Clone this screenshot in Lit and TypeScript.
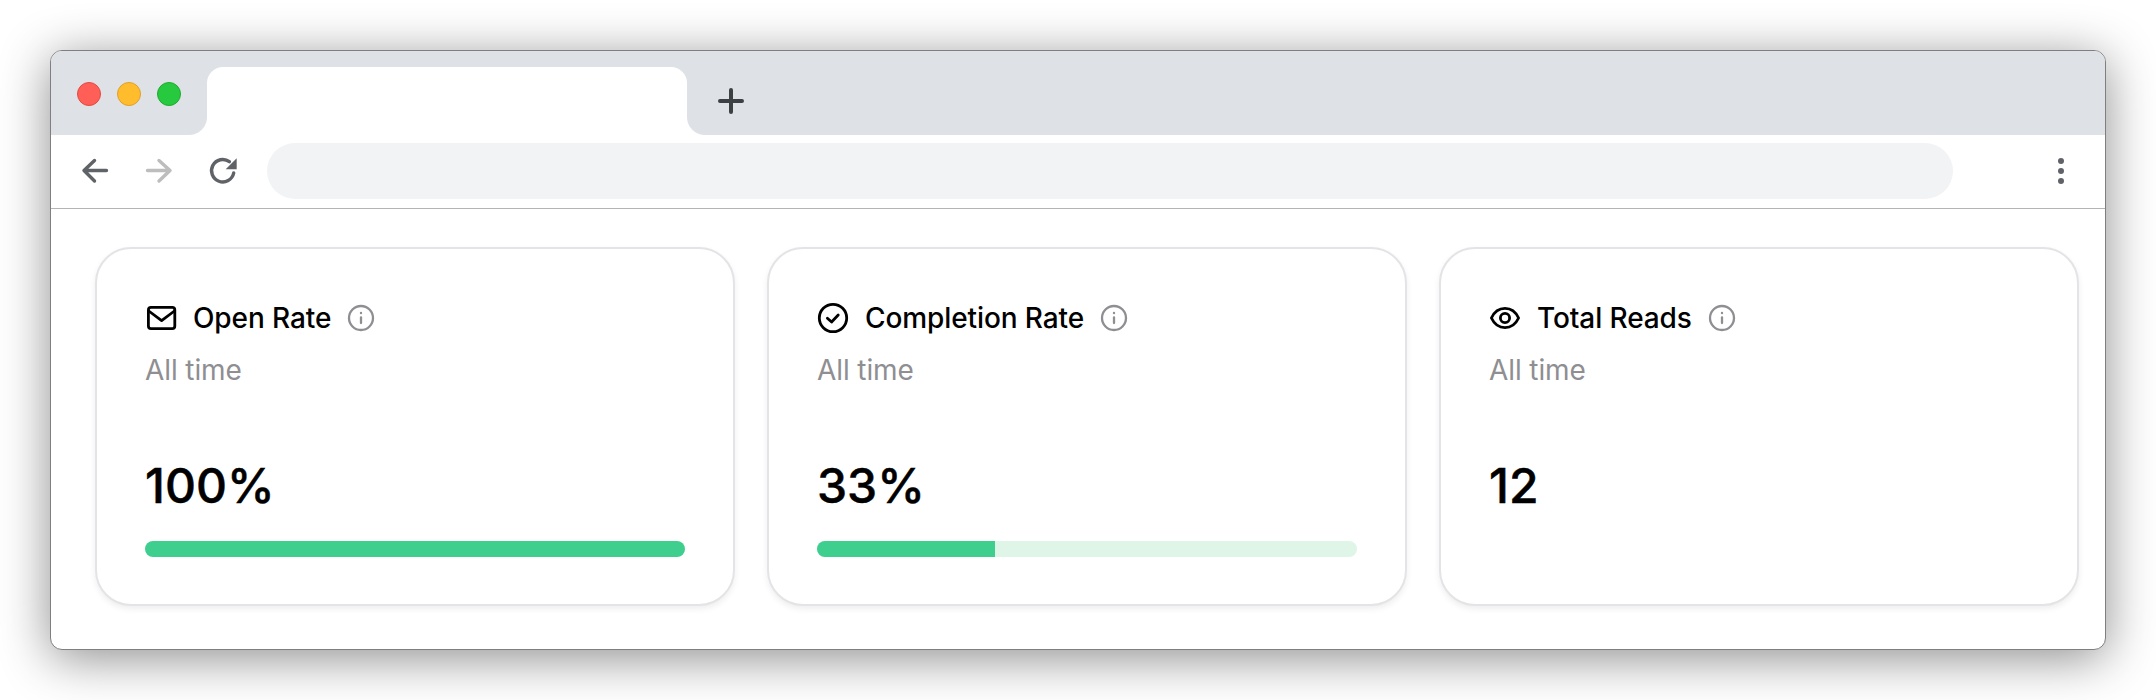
import { LitElement, html, css, svg, nothing } from "lit";
import { customElement } from "lit/decorators.js";

type Metric = {
  title: string;
  icon: "mail" | "check" | "eye";
  value: string;
  progress?: number;
};

const METRICS: Metric[] = [
  { title: "Open Rate", icon: "mail", value: "100%", progress: 100 },
  { title: "Completion Rate", icon: "check", value: "33%", progress: 33 },
  { title: "Total Reads", icon: "eye", value: "12" },
];

const ICONS = {
  mail: svg`
    <rect x="3.4" y="5.3" width="26.4" height="21.4" rx="2.6"></rect>
    <path d="M3.8 9 L16.6 18.6 L29.4 9"></path>`,
  check: svg`
    <circle cx="16" cy="16" r="13.7"></circle>
    <path d="M10.4 16.2 L14.6 20 L21.2 13"></path>`,
  eye: svg`
    <path d="M2.4 16 C5.4 9.6 10.2 6.4 16 6.4 C21.8 6.4 26.6 9.6 29.6 16 C26.6 22.4 21.8 25.6 16 25.6 C10.2 25.6 5.4 22.4 2.4 16 Z"></path>
    <circle cx="16" cy="16" r="4.6"></circle>`,
};

@customElement("app-root")
export class AppRoot extends LitElement {
  static styles = css`
    :host {
      display: block;
      box-sizing: border-box;
      height: 700px;
      padding: 50px;
      background: #fff;
      font-family: Inter, "Liberation Sans", sans-serif;
    }

    /* ── Browser chrome ─────────────────────────────────────────────────── */
    .window {
      box-sizing: border-box;
      display: flex;
      flex-direction: column;
      height: 600px;
      background: #fff;
      border: 1px solid #7f7f7f;
      border-radius: 12px;
      box-shadow: 0 8px 50px rgba(0, 0, 0, 0.45);
      overflow: hidden;
    }
    .tabstrip {
      display: flex;
      align-items: flex-end;
      height: 84px;
      flex: none;
      background: #dee1e6;
    }
    .lights {
      display: flex;
      gap: 16px;
      align-self: flex-start;
      padding: 31px 0 0 26px;
      width: 130px;
      box-sizing: border-box;
    }
    .light {
      box-sizing: border-box;
      width: 24px;
      height: 24px;
      border-radius: 50%;
      border: 1px solid;
    }
    .red { background: #ff5f57; border-color: #e5493f; }
    .yellow { background: #ffbd2e; border-color: #e0a028; }
    .green { background: #27c93f; border-color: #1eab2e; }
    .tab {
      position: relative;
      width: 480px;
      height: 68px;
      margin-left: 26px;
      background: #fff;
      border-radius: 16px 16px 0 0;
    }
    .tab::before,
    .tab::after {
      content: "";
      position: absolute;
      bottom: 0;
      width: 18px;
      height: 18px;
    }
    .tab::before {
      left: -18px;
      background: radial-gradient(circle at 0 0, #dee1e6 17.5px, #fff 18.5px);
    }
    .tab::after {
      right: -18px;
      background: radial-gradient(circle at 100% 0, #dee1e6 17.5px, #fff 18.5px);
    }
    .plus {
      width: 26px;
      height: 26px;
      margin: 0 0 21px 31px;
      stroke: #3c4043;
      stroke-width: 4;
      stroke-linecap: round;
      fill: none;
    }
    .toolbar {
      display: flex;
      align-items: center;
      flex: none;
      height: 74px;
      box-sizing: border-box;
      border-bottom: 1px solid #b4b4b4;
      padding: 0 0 1px 28px;
    }
    .nav {
      width: 32px;
      height: 32px;
      margin-right: 32px;
      fill: none;
      stroke: #5f6368;
      stroke-width: 3.4;
      stroke-linecap: round;
      stroke-linejoin: round;
    }
    .nav.off { stroke: #bdbdbd; }
    .nav.reload { margin-right: 28px; }
    .address {
      width: 1686px;
      height: 56px;
      border-radius: 28px;
      background: #f1f3f4;
    }
    .menu {
      display: flex;
      flex-direction: column;
      gap: 4px;
      margin-left: 105px;
    }
    .menu span {
      width: 6px;
      height: 6px;
      border-radius: 50%;
      background: #5f6368;
    }

    /* ── Metric cards ───────────────────────────────────────────────────── */
    .content {
      flex: 1;
      display: grid;
      grid-template-columns: repeat(3, 640px);
      gap: 32px;
      padding: 38px 0 43px 44px;
    }
    .card {
      box-sizing: border-box;
      display: flex;
      flex-direction: column;
      padding: 53px 48px 0;
      border: 2px solid #e4e4e7;
      border-radius: 36px;
      background: #fff;
      box-shadow: 0 3px 6px rgba(0, 0, 0, 0.07);
    }
    .head {
      display: flex;
      align-items: center;
      height: 32px;
    }
    .icon {
      width: 32px;
      height: 32px;
      flex: none;
      fill: none;
      stroke: #000;
      stroke-width: 2.8;
      stroke-linecap: round;
      stroke-linejoin: round;
    }
    .title {
      margin-left: 16px;
      font-size: 28px;
      font-weight: 500;
      letter-spacing: -0.1px;
      line-height: 32px;
      color: #000;
    }
    .info {
      width: 28px;
      height: 28px;
      margin-left: 16px;
      fill: none;
      stroke: #8e8e93;
      stroke-width: 2.3;
      stroke-linecap: round;
    }
    .period {
      margin-top: 20px;
      font-size: 28px;
      letter-spacing: -0.1px;
      line-height: 32px;
      color: #8e8e93;
    }
    .value {
      margin-top: 71px;
      font-size: 48px;
      font-weight: 500;
      -webkit-text-stroke: 0.5px #000;
      line-height: 58px;
      color: #000;
    }
    .track {
      height: 16px;
      margin-top: 26px;
      border-radius: 8px;
      background: #dff5e8;
      overflow: hidden;
    }
    .fill {
      height: 100%;
      background: #3ecf8e;
    }
  `;

  private renderCard(m: Metric) {
    return html`
      <section class="card">
        <div class="head">
          <svg class="icon" viewBox="0 0 32 32">${ICONS[m.icon]}</svg>
          <span class="title">${m.title}</span>
          <svg class="info" viewBox="0 0 28 28">
            <circle cx="14" cy="14" r="12"></circle>
            <path d="M14 13.5 V19"></path>
            <path d="M14 9 V9.2"></path>
          </svg>
        </div>
        <div class="period">All time</div>
        <div class="value">${m.value}</div>
        ${m.progress === undefined
          ? nothing
          : html`<div class="track"><div class="fill" style="width:${m.progress}%"></div></div>`}
      </section>
    `;
  }

  render() {
    return html`
      <div class="window">
        <div class="tabstrip">
          <div class="lights">
            <span class="light red"></span>
            <span class="light yellow"></span>
            <span class="light green"></span>
          </div>
          <div class="tab"></div>
          <svg class="plus" viewBox="0 0 26 26"><path d="M13 2 V24 M2 13 H24"></path></svg>
        </div>
        <div class="toolbar">
          <svg class="nav" viewBox="0 0 32 32"><path d="M27.5 15.5 H5 M15.5 5.5 L5 15.5 L15.5 26"></path></svg>
          <svg class="nav off" viewBox="0 0 32 32"><path d="M4.5 15.5 H27 M16 5.5 L27 15.5 L16 26"></path></svg>
          <svg class="nav reload" viewBox="0 0 32 32">
            <path d="M26.7 18 A11.2 11.2 0 1 1 22.4 6.7"></path>
            <path d="M29.7 3.3 V14.3 H18.7 Z" fill="#5f6368" stroke="none"></path>
          </svg>
          <div class="address"></div>
          <div class="menu"><span></span><span></span><span></span></div>
        </div>
        <div class="content">${METRICS.map((m) => this.renderCard(m))}</div>
      </div>
    `;
  }
}
